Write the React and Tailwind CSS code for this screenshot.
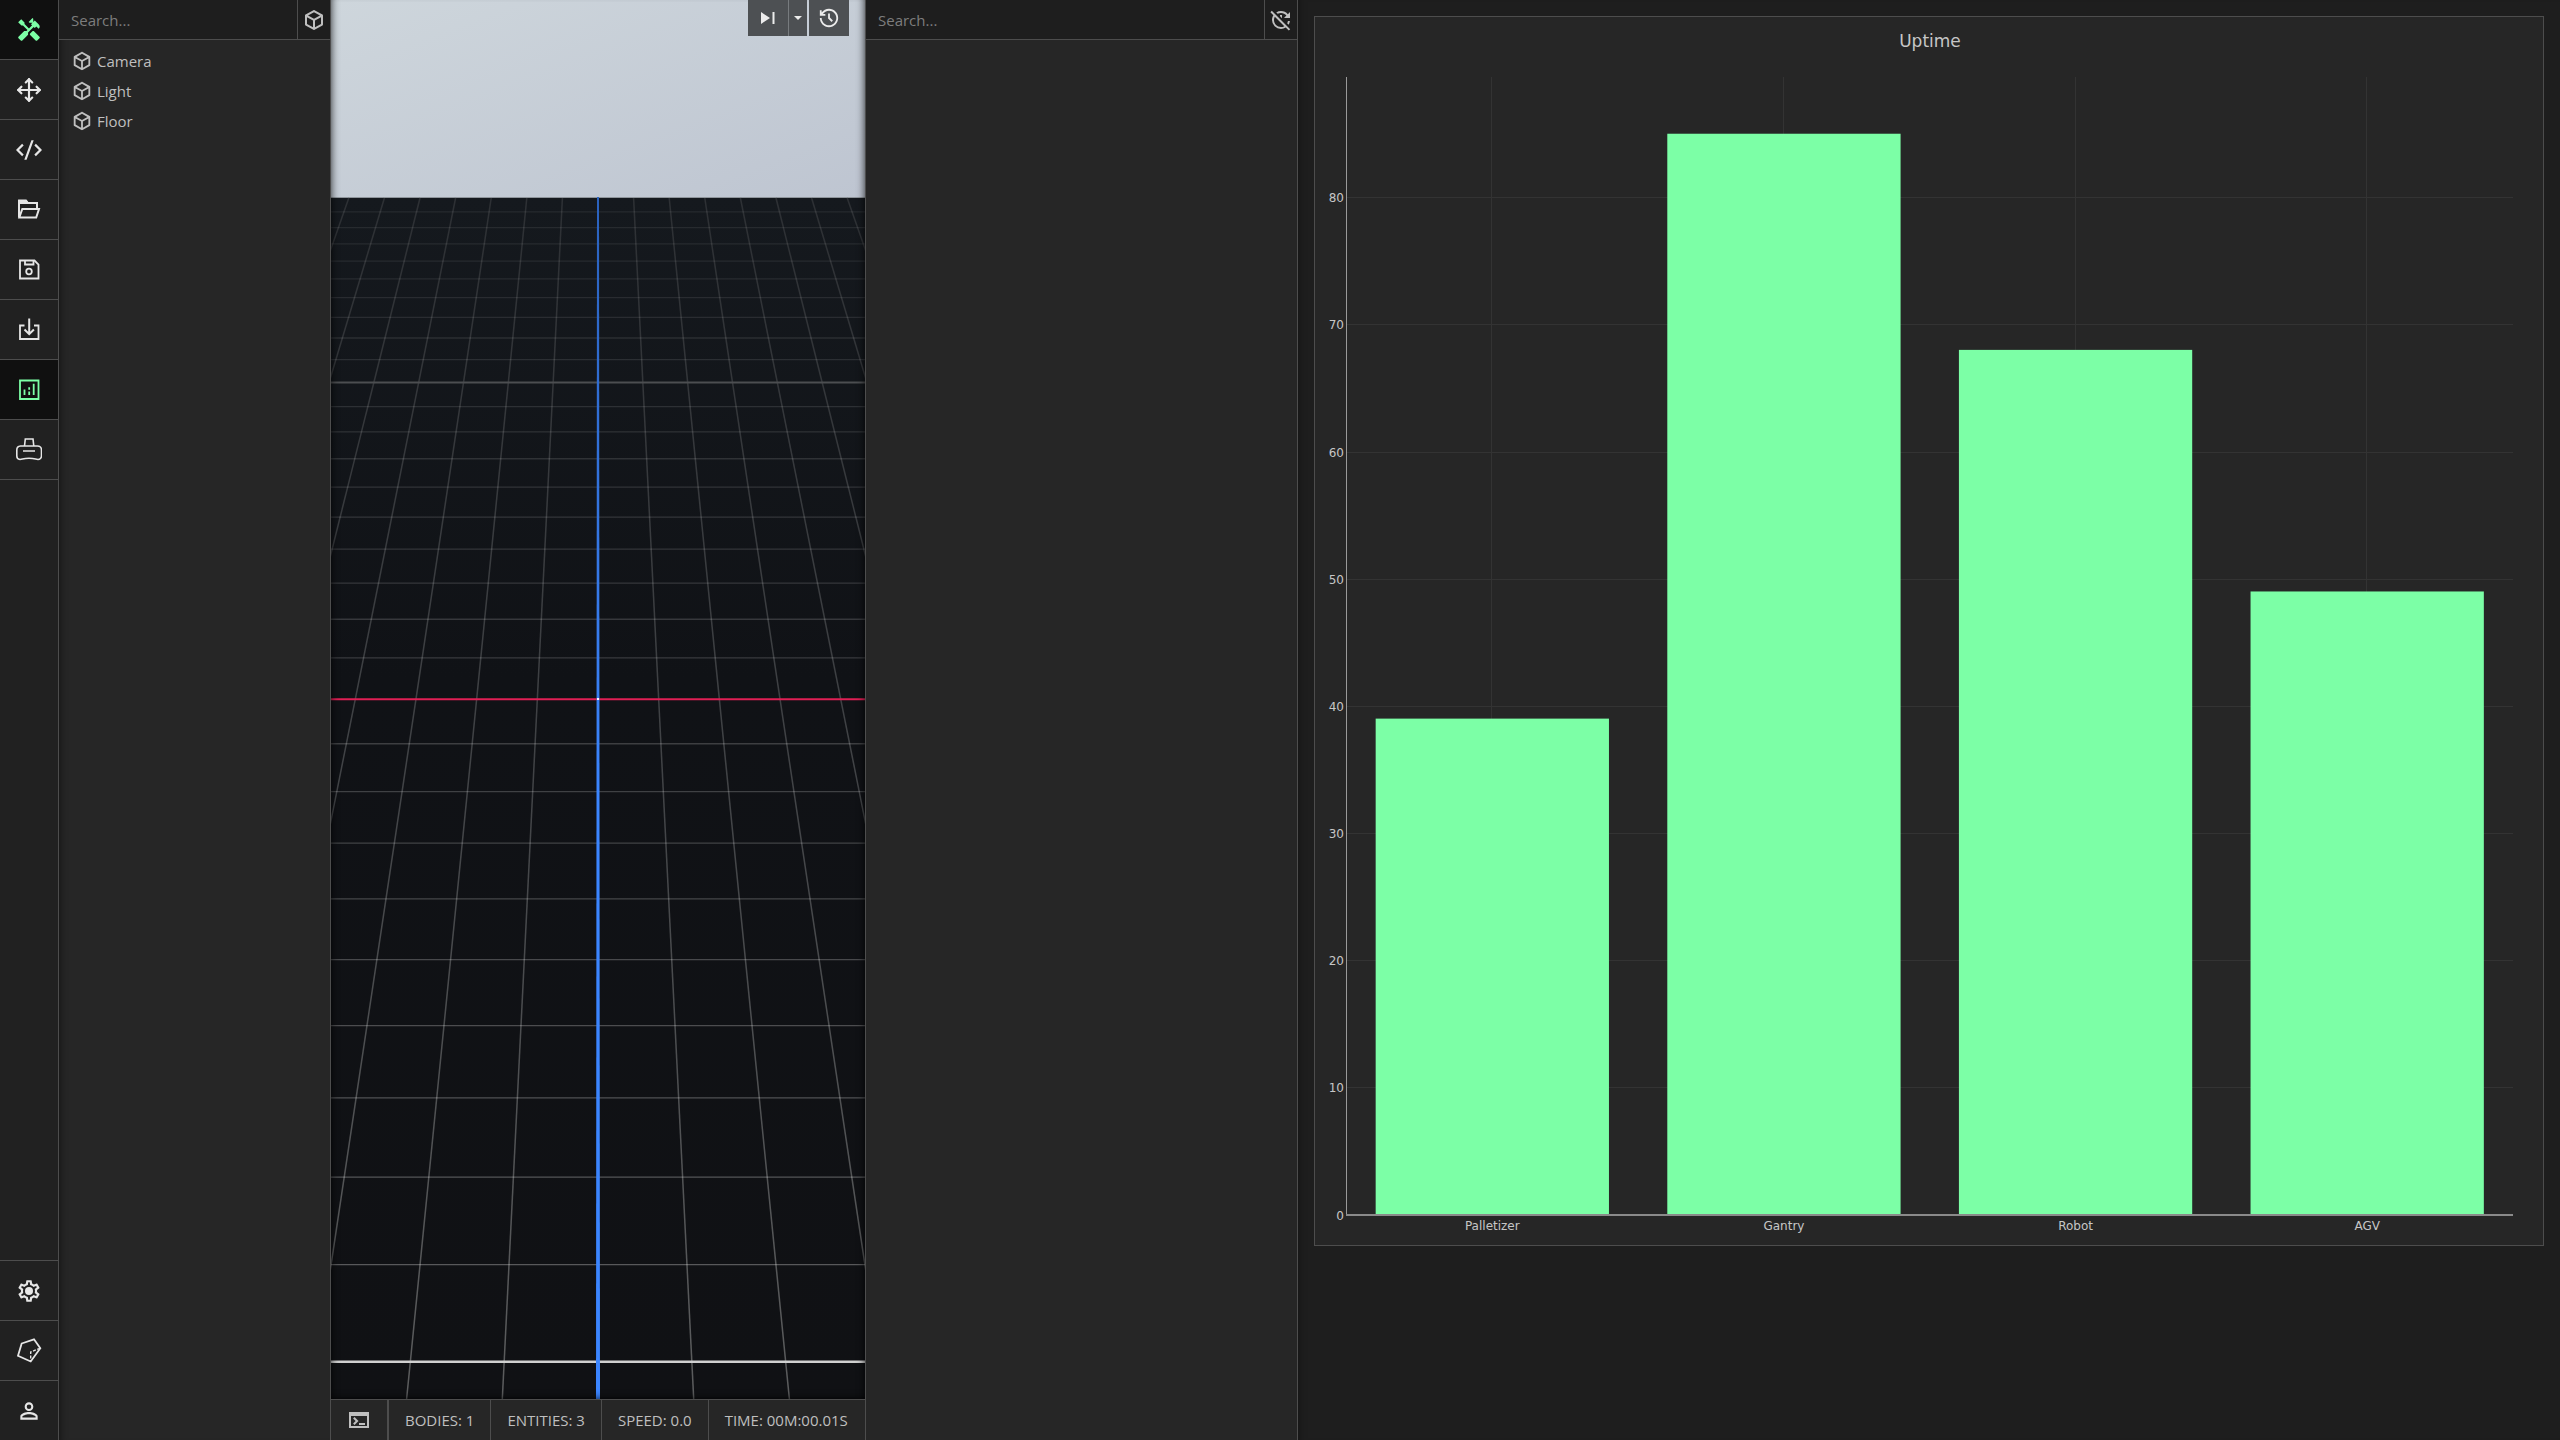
import React, { useState } from 'react';
import { MdHandyman, MdUpdateDisabled, MdPersonOutline } from 'react-icons/md';
import { FiMove } from 'react-icons/fi';
import { RiCodeSSlashLine, RiHistoryLine } from 'react-icons/ri';

const ENTITIES = ['Camera', 'Light', 'Floor'];

const UPTIME = [
  { label: 'Palletizer', value: 39 },
  { label: 'Gantry', value: 85 },
  { label: 'Robot', value: 68 },
  { label: 'AGV', value: 49 },
];

const Glyph = ({ children }) => (
  <svg width="26" height="26" viewBox="0 0 26 26" fill="none" stroke="currentColor" strokeWidth="1.8">
    {children}
  </svg>
);

const FolderIcon = () => (
  <Glyph>
    <path d="M3 20.500V4h6.500l2 2h9.500v5" strokeWidth="2" />
    <path d="M3 3.500h7l2 2.500H3z" fill="currentColor" />
    <path d="M3.300 20.500 6.300 12H23l-2.800 8.500z" strokeWidth="2" />
  </Glyph>
);

const SaveIcon = () => (
  <Glyph>
    <path d="M4 3.500h14.500l4 4v14H4z" />
    <path d="M9 3.500v4h8.500v-4" />
    <circle cx="13" cy="14.500" r="2.800" />
  </Glyph>
);

const ImportIcon = () => (
  <Glyph>
    <path d="M8.500 8.500H4v13.500h18.500V8.500H18" />
    <path d="M13.200 1.500V17M8.500 12.500l4.700 4.700 4.700-4.700" strokeWidth="2" />
  </Glyph>
);

const ChartIcon = () => (
  <Glyph>
    <path d="M4 3.500h18.500v18.500H4z" />
    <path d="M8.500 12.500V18M13.200 10.300v2.500M13.200 14.500V18M17.700 6.800V18" />
  </Glyph>
);

const DeviceIcon = () => (
  <Glyph>
    <path
      d="M4.500 9h17a4 4 0 0 1 4 4v6a3.500 3.500 0 0 1-3.500 3.500c-2.500 0-3-1.200-9-1.200s-6.500 1.200-9 1.200A3.500 3.500 0 0 1 .8 19v-6a4 4 0 0 1 3.700-4z"
      strokeWidth="1.600"
    />
    <path d="M8.500 9 9.300 2h7.700l.8 7M7 14h12" strokeWidth="1.600" />
  </Glyph>
);

const GearIcon = () => (
  <svg width="26" height="26" viewBox="0 0 24 24" fill="currentColor">
    <path d="M19.430 12.980c.04-.32.07-.64.07-.98s-.03-.66-.07-.98l2.110-1.650c.19-.15.24-.42.12-.64l-2-3.460c-.12-.22-.39-.3-.61-.22l-2.490 1c-.52-.4-1.080-.73-1.690-.98l-.38-2.650C14.460 2.180 14.250 2 14 2h-4c-.25 0-.46.18-.49.42l-.38 2.650c-.61.25-1.170.59-1.690.98l-2.490-1c-.23-.09-.49 0-.61.22l-2 3.460c-.13.22-.07.49.12.64l2.110 1.650c-.04.32-.07.65-.07.98s.03.66.07.98l-2.110 1.650c-.19.15-.24.42-.12.64l2 3.460c.12.22.39.3.61.22l2.490-1c.52.4 1.080.73 1.690.98l.38 2.650c.03.24.24.42.49.42h4c.25 0 .46-.18.49-.42l.38-2.650c.61-.25 1.170-.59 1.690-.98l2.490 1c.23.09.49 0 .61-.22l2-3.460c.12-.22.07-.49-.12-.64l-2.110-1.650zm-1.980-1.710c.04.31.05.52.05.73 0 .21-.02.43-.05.73l-.14 1.130.89.7 1.080.84-.7 1.210-1.270-.51-1.040-.42-.9.68c-.43.32-.84.56-1.250.73l-1.060.43-.16 1.130-.2 1.350h-1.400l-.19-1.350-.16-1.130-1.060-.43c-.43-.18-.83-.41-1.230-.71l-.91-.7-1.060.43-1.270.51-.7-1.210 1.080-.84.89-.7-.14-1.130c-.03-.31-.05-.54-.05-.74s.02-.43.05-.73l.14-1.130-.89-.7-1.080-.84.7-1.210 1.270.51 1.040.42.9-.68c.43-.32.84-.56 1.250-.73l1.060-.43.16-1.130.2-1.350h1.390l.19 1.350.16 1.130 1.060.43c.43.18.83.41 1.230.71l.91.7 1.060-.43 1.270-.51.7 1.210-1.070.85-.89.7.14 1.130z" />
    <circle cx="12" cy="12" r="3.700" />
  </svg>
);

const MeshIcon = () => (
  <Glyph>
    <path d="M5.700 5.500 18 1.300l6.300 9-9.600 13.200L2 17.800z" />
    <path d="M24 10.300 14.700 14v9" strokeWidth="1.400" strokeDasharray="3 1.500" />
  </Glyph>
);

const CubeIcon = ({ size = 24 }) => (
  <svg width={size} height={size} viewBox="0 0 24 24" fill="currentColor">
    <path d="M21 16.500c0 .38-.21.710-.53.880l-7.900 4.440c-.16.120-.36.180-.57.180s-.41-.06-.57-.18l-7.900-4.440A.99.99 0 0 1 3 16.500v-9c0-.38.210-.71.530-.88l7.900-4.440c.16-.12.360-.18.570-.18s.410.060.570.180l7.900 4.440c.32.170.530.500.530.880zM12 4.150 6.040 7.500 12 10.850l5.960-3.350zM5 15.910l6 3.380v-6.710L5 9.210zm14 0v-6.700l-6 3.370v6.710z" />
  </svg>
);

const ConsoleIcon = () => (
  <svg width="24" height="24" viewBox="0 0 24 24" fill="currentColor">
    <path d="M2 4h20v16H2zm2 4v10h16V8z" fillRule="evenodd" />
    <path d="M7.500 17l-1.410-1.410L8.670 13l-2.590-2.590L7.500 9l4 4zM12 15h6v2h-6z" />
  </svg>
);

const TOP_TOOLS = [
  { name: 'Build', icon: <MdHandyman size={26} />, active: true },
  { name: 'Move', icon: <FiMove size={26} /> },
  { name: 'Script', icon: <RiCodeSSlashLine size={26} /> },
  { name: 'Open', icon: <FolderIcon /> },
  { name: 'Save', icon: <SaveIcon /> },
  { name: 'Import', icon: <ImportIcon /> },
  { name: 'Charts', icon: <ChartIcon />, active: true },
  { name: 'Device', icon: <DeviceIcon /> },
];

const BOTTOM_TOOLS = [
  { name: 'Settings', icon: <GearIcon /> },
  { name: 'Mesh', icon: <MeshIcon /> },
  { name: 'Account', icon: <MdPersonOutline size={26} /> },
];

const Sidebar = () => (
  <nav className="flex w-[59px] shrink-0 flex-col justify-between border-r border-[#4d4d4d] bg-[#212121] text-[#e6e6e6]">
    <div className="flex flex-col">
      {TOP_TOOLS.map((tool) => (
        <button
          key={tool.name}
          aria-label={tool.name}
          className={
            tool.active
              ? 'flex h-[60px] items-center justify-center border-b border-[#4d4d4d] bg-[#101010] text-[#7cffa6]'
              : 'flex h-[60px] items-center justify-center border-b border-[#4d4d4d]'
          }
        >
          {tool.icon}
        </button>
      ))}
    </div>
    <div className="flex flex-col">
      {BOTTOM_TOOLS.map((tool) => (
        <button
          key={tool.name}
          aria-label={tool.name}
          className="flex h-[60px] items-center justify-center border-t border-[#4d4d4d]"
        >
          {tool.icon}
        </button>
      ))}
    </div>
  </nav>
);

const SearchBar = ({ label, value, onChange, action, icon }) => (
  <div className="flex h-10 shrink-0 border-b border-[#4d4d4d] bg-[#1e1e1e]">
    <input
      type="text"
      aria-label={label}
      placeholder="Search..."
      value={value}
      onChange={(e) => onChange(e.target.value)}
      className="min-w-0 flex-1 px-3 pt-0.5 text-[15px] text-[#bfbfbf] outline-none placeholder:text-[#7d7d7d]"
    />
    <button aria-label={action} className="flex w-[33px] items-center justify-center border-l border-[#4d4d4d]">
      {icon}
    </button>
  </div>
);

// Perspective floor: lines meet at VANISH_Y, one grid unit is 1 / DEPTH of the distance
const VIEW_W = 534;
const VIEW_H = 1399;
const CENTER_X = 267;
const VANISH_Y = -515;
const FLOOR_TOP = 197;
const DEPTH = 28.33;
const rowY = (n) => VANISH_Y + 34402 / (DEPTH + n);
const colX = (k, y) => CENTER_X + k * 0.05 * (y - VANISH_Y);

const Scene = () => {
  const rows = [];
  for (let n = -9; n <= 19; n++) {
    if (n !== 0 && n !== 10) rows.push(n);
  }
  const cols = [-7, -6, -5, -4, -3, -2, -1, 1, 2, 3, 4, 5, 6, 7];

  return (
    <svg
      className="block h-full w-full"
      viewBox={`0 0 ${VIEW_W} ${VIEW_H}`}
      preserveAspectRatio="xMidYMid slice"
      role="img"
      aria-label="Scene"
    >
      <defs>
        <linearGradient id="sky" x1="0" y1="0" x2="1" y2="1">
          <stop offset="0" stopColor="#ced6dc" />
          <stop offset="1" stopColor="#bec5d1" />
        </linearGradient>
        <linearGradient id="floor" x1="0" y1="0" x2="0" y2="1">
          <stop offset="0" stopColor="#15191e" />
          <stop offset="0.4" stopColor="#101216" />
          <stop offset="1" stopColor="#101114" />
        </linearGradient>
        <linearGradient id="lines" gradientUnits="userSpaceOnUse" x1="0" y1={FLOOR_TOP} x2="0" y2={VIEW_H}>
          <stop offset="0" stopColor="#2d3034" />
          <stop offset="0.5" stopColor="#424447" />
          <stop offset="1" stopColor="#5c5d5e" />
        </linearGradient>
        <linearGradient id="axis" gradientUnits="userSpaceOnUse" x1="0" y1={FLOOR_TOP} x2="0" y2="800">
          <stop offset="0" stopColor="#2b62bd" />
          <stop offset="1" stopColor="#3b85ff" />
        </linearGradient>
      </defs>
      <rect width={VIEW_W} height={FLOOR_TOP} fill="url(#sky)" />
      <rect y={FLOOR_TOP} width={VIEW_W} height={VIEW_H - FLOOR_TOP} fill="url(#floor)" />
      <path d={`M0 ${FLOOR_TOP + 0.5}H${VIEW_W}`} stroke="#8f959b" />
      {cols.map((k) => (
        <line
          key={k}
          x1={colX(k, FLOOR_TOP)}
          y1={FLOOR_TOP + 1}
          x2={colX(k, VIEW_H)}
          y2={VIEW_H}
          stroke="url(#lines)"
          strokeWidth="1.500"
        />
      ))}
      {rows.map((n) => (
        <line
          key={n}
          x1="0"
          y1={rowY(n)}
          x2={VIEW_W}
          y2={rowY(n)}
          stroke="#ffffff"
          strokeOpacity={0.07 + 0.26 * ((rowY(n) - FLOOR_TOP) / (VIEW_H - FLOOR_TOP))}
          strokeWidth="1.300"
        />
      ))}
      <path d={`M0 ${rowY(10)}H${VIEW_W}`} stroke="#4c4e51" strokeWidth="2" />
      <path d={`M0 ${rowY(-10)}H${VIEW_W}`} stroke="#d0d0d0" strokeWidth="2.600" />
      <path d={`M0 ${rowY(0)}H${VIEW_W}`} stroke="#e01f55" strokeWidth="2" />
      <path d={`M266 ${FLOOR_TOP}h2L269 ${VIEW_H}h-4z`} fill="url(#axis)" />
      <rect x="266" y="698" width="2" height="2" fill="#ffffff" />
    </svg>
  );
};

const StatusBar = () => (
  <footer className="flex h-[41px] shrink-0 border-t border-[#4d4d4d] bg-[#262626] text-[15px] whitespace-nowrap">
    <button aria-label="Console" className="flex w-[57px] shrink-0 items-center justify-center border-r border-[#4d4d4d]">
      <ConsoleIcon />
    </button>
    <span className="flex items-center border-l border-[#4d4d4d] px-4">BODIES: 1</span>
    <span className="flex items-center border-l border-[#4d4d4d] px-4">ENTITIES: 3</span>
    <span className="flex items-center border-l border-[#4d4d4d] px-4">SPEED: 0.0</span>
    <span className="flex items-center border-l border-[#4d4d4d] px-4">TIME: 00M:00.01S</span>
  </footer>
);

const Viewport = () => (
  <main className="flex min-w-0 flex-[534] flex-col border-r border-[#4d4d4d]">
    <div className="relative min-h-0 flex-1">
      <Scene />
      <div className="pointer-events-none absolute inset-0 shadow-[inset_8px_0_8px_-8px_rgba(0,0,0,0.8),inset_-8px_0_8px_-8px_rgba(0,0,0,0.8),inset_0_-8px_8px_-8px_rgba(0,0,0,0.8)]" />
      <div className="absolute top-0 right-4 flex h-9 text-[#ececec]">
        <button aria-label="Step" className="flex w-10 items-center justify-center bg-[#4d5053]">
          <svg width="14" height="12" viewBox="0 0 14 12" fill="currentColor">
            <path d="M0 0l9 6-9 6zM11.500 0h2v12h-2z" />
          </svg>
        </button>
        <button aria-label="Step size" className="flex w-[19px] items-center justify-center border-l border-[#777b7e] bg-[#4d5053]">
          <svg width="8" height="4" viewBox="0 0 8 4" fill="currentColor">
            <path d="M0 0h8L4 4z" />
          </svg>
        </button>
        <button aria-label="Reset" className="ml-0.5 flex w-10 items-center justify-center bg-[#4d5053]">
          <RiHistoryLine size={22} />
        </button>
      </div>
    </div>
    <StatusBar />
  </main>
);

// Bar chart geometry
const SIZE = 1228;
const PLOT = { left: 31.5, right: 1198, top: 60, bottom: 1197.5 };
const UNIT = 12.715;
const TICKS = [0, 10, 20, 30, 40, 50, 60, 70, 80];

const BarChart = ({ title, data }) => {
  const step = (PLOT.right - PLOT.left) / data.length;
  const barWidth = step * 0.8;

  return (
    <figure className="m-4 border border-[#4d4d4d] bg-[#262626]">
      <svg
        className="block h-auto w-full font-['DejaVu_Sans',sans-serif]"
        viewBox={`0 0 ${SIZE} ${SIZE}`}
        fill="#c6c6c6"
        fontSize="12"
        role="img"
        aria-label={title}
      >
        <text x={SIZE / 2 + 1} y="30" fontSize="17" textAnchor="middle">
          {title}
        </text>
        {TICKS.slice(1).map((tick) => (
          <rect key={tick} x={PLOT.left} y={Math.round(PLOT.bottom - tick * UNIT)} width={PLOT.right - PLOT.left} height="1" fill="#333333" />
        ))}
        {data.map((item, i) => (
          <rect key={item.label} x={Math.round(PLOT.left + step * (i + 0.5)) - 1} y={PLOT.top} width="1" height={PLOT.bottom - PLOT.top} fill="#333333" />
        ))}
        {data.map((item, i) => (
          <rect
            key={item.label}
            x={PLOT.left + step * (i + 0.1)}
            y={PLOT.bottom - item.value * UNIT}
            width={barWidth}
            height={item.value * UNIT}
            fill="#7cffa6"
          />
        ))}
        <rect x="31" y={PLOT.top} width="1" height="1139" fill="#9a9a9a" />
        <rect x="31" y="1197" width={PLOT.right - 31} height="2" fill="#8a8a8a" />
        {TICKS.map((tick) => (
          <text key={tick} x="29" y={Math.round(PLOT.bottom - tick * UNIT) + 5} textAnchor="end">
            {tick}
          </text>
        ))}
        {data.map((item, i) => (
          <text key={item.label} x={PLOT.left + step * (i + 0.5)} y="1213" textAnchor="middle">
            {item.label}
          </text>
        ))}
      </svg>
    </figure>
  );
};

const App = () => {
  const [entityFilter, setEntityFilter] = useState('');
  const [propertyFilter, setPropertyFilter] = useState('');

  const entities = ENTITIES.filter((name) => name.toLowerCase().includes(entityFilter.toLowerCase()));

  return (
    <div className="flex h-screen overflow-hidden bg-[#1e1e1e] font-['Open_Sans',sans-serif] text-[#bfbfbf]">
      <Sidebar />

      <aside className="flex w-[272px] shrink-0 flex-col border-r border-[#4d4d4d] bg-[#262626] shadow-[inset_8px_0_8px_-8px_rgba(0,0,0,0.6)]">
        <SearchBar
          label="Search entities"
          value={entityFilter}
          onChange={setEntityFilter}
          action="Add entity"
          icon={<CubeIcon />}
        />
        <ul className="flex flex-col py-1.5">
          {entities.map((name) => (
            <li key={name}>
              <button className="flex h-[30px] w-full items-center gap-1 px-3 text-[15px]">
                <CubeIcon size={22} />
                {name}
              </button>
            </li>
          ))}
        </ul>
      </aside>

      <Viewport />

      <aside className="flex w-[432px] shrink-0 flex-col border-r border-[#4d4d4d] bg-[#262626]">
        <SearchBar
          label="Search properties"
          value={propertyFilter}
          onChange={setPropertyFilter}
          action="Auto update"
          icon={<MdUpdateDisabled size={24} />}
        />
      </aside>

      <section className="min-w-0 flex-[1262] shadow-[inset_8px_0_8px_-8px_rgba(0,0,0,0.4)]">
        <BarChart title="Uptime" data={UPTIME} />
      </section>
    </div>
  );
};

export default App;
